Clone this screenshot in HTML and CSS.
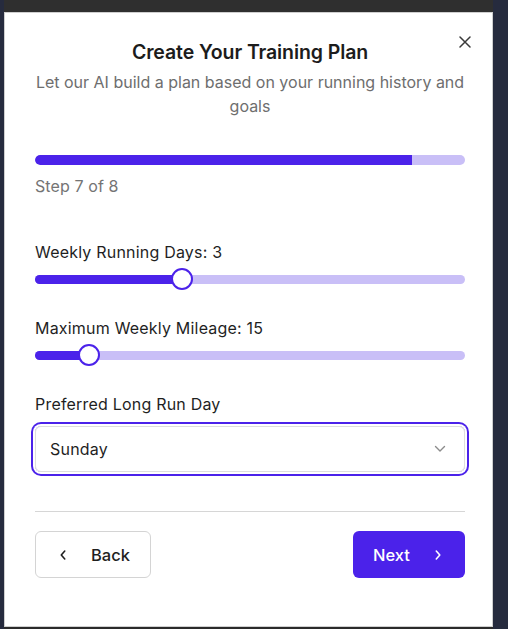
FILE: index.html
```html
<!DOCTYPE html>
<html lang="en">
<head>
<meta charset="utf-8">
<title>Create Your Training Plan</title>
<link rel="stylesheet" href="styles.css">
</head>
<body>
<div class="frame">
  <div class="topbar"></div>
  <div class="modal">
    <button class="close" aria-label="Close">
      <svg width="12" height="12" viewBox="0 0 12 12"><path d="M1 1L11 11M11 1L1 11" stroke="#3a3a3a" stroke-width="1.5" stroke-linecap="round"/></svg>
    </button>
    <h1 class="title">Create Your Training Plan</h1>
    <p class="subtitle">Let our AI build a plan based on your running history and goals</p>

    <div class="progress"><div class="progress-fill" style="width:87.6%"></div></div>
    <p class="step">Step 7 of 8</p>

    <div class="field">
      <label class="label">Weekly Running Days: 3</label>
      <div class="slider">
        <div class="track"><div class="fill" style="width:147px"></div></div>
        <div class="thumb" style="left:136px"></div>
      </div>
    </div>

    <div class="field">
      <label class="label">Maximum Weekly Mileage: 15</label>
      <div class="slider">
        <div class="track"><div class="fill" style="width:54px"></div></div>
        <div class="thumb" style="left:43px"></div>
      </div>
    </div>

    <div class="field field-select">
      <label class="label">Preferred Long Run Day</label>
      <div class="select">
        <span>Sunday</span>
        <svg width="12" height="8" viewBox="0 0 12 8"><path d="M1.5 1.5L6 6L10.5 1.5" fill="none" stroke="#8c8c8c" stroke-width="1.4" stroke-linecap="round" stroke-linejoin="round"/></svg>
      </div>
    </div>

    <hr class="divider">

    <div class="actions">
      <button class="btn btn-back">
        <svg width="16" height="16" viewBox="0 0 16 16"><path d="M10 3.5L6 8L10 12.5" fill="none" stroke="#1f1f1f" stroke-width="1.8" stroke-linecap="round" stroke-linejoin="round"/></svg>
        <span>Back</span>
      </button>
      <button class="btn btn-next">
        <span>Next</span>
        <svg width="16" height="16" viewBox="0 0 16 16"><path d="M6 3.5L10 8L6 12.5" fill="none" stroke="#ffffff" stroke-width="1.8" stroke-linecap="round" stroke-linejoin="round"/></svg>
      </button>
    </div>
  </div>
  <div class="bottombar"></div>
</div>
</body>
</html>
```
FILE: styles.css
```css
* { box-sizing: border-box; }

html, body {
  margin: 0;
  padding: 0;
  height: 629px;
  overflow: hidden;
}

body {
  background: #262b3e;
  font-family: Inter, "Noto Sans", "Liberation Sans", sans-serif;
  color: #1f1f1f;
}

.frame {
  margin-left: 4px;
  width: 489px;
  height: 629px;
  display: flex;
  flex-direction: column;
}

.topbar {
  height: 12px;
  background: #2f2f2f;
  flex: none;
}

.bottombar {
  flex: 1;
  background: #2b2b2b;
}

.modal {
  position: relative;
  height: 615px;
  flex: none;
  background: #ffffff;
  border: 1px solid #cfcfcf;
  padding: 25px 27px 0 30px;
  display: flex;
  flex-direction: column;
}

.close {
  position: absolute;
  top: 23px;
  right: 21px;
  width: 12px;
  height: 12px;
  padding: 0;
  border: 0;
  background: none;
  display: flex;
}

.title {
  margin: 0;
  font-size: 19.5px;
  line-height: 28px;
  font-weight: 600;
  text-align: center;
  color: #1c1c1c;
  letter-spacing: -0.1px;
}

.subtitle {
  margin: 4px 0 0;
  font-size: 16px;
  line-height: 24px;
  text-align: center;
  color: #6e6e6e;
}

.progress {
  margin-top: 37px;
  height: 10px;
  border-radius: 5px;
  background: #c9bff7;
  overflow: hidden;
}

.progress-fill {
  height: 100%;
  background: #4b22ea;
  border-radius: 5px 0 0 5px;
}

.step {
  margin: 9px 0 0;
  font-size: 16px;
  line-height: 24px;
  color: #747474;
  letter-spacing: 0.1px;
}

.field {
  display: flex;
  flex-direction: column;
}

.step + .field { margin-top: 42px; }
.field + .field { margin-top: 26px; }

.label {
  font-size: 16px;
  line-height: 24px;
  color: #1f1f1f;
  letter-spacing: 0.2px;
}

.slider {
  position: relative;
  margin-top: 4px;
  height: 22px;
  display: flex;
  align-items: center;
}

.track {
  width: 100%;
  height: 9px;
  border-radius: 5px;
  background: #c9bff7;
  overflow: hidden;
}

.fill {
  height: 100%;
  background: #4b22ea;
}

.thumb {
  position: absolute;
  top: 0;
  width: 22px;
  height: 22px;
  border-radius: 50%;
  background: #ffffff;
  border: 2px solid #4b22ea;
}

.field-select .label { margin-bottom: 10px; }

.select {
  height: 46px;
  border: 1.5px solid #dedede;
  border-radius: 6px;
  box-shadow: 0 0 0 2px #ffffff, 0 0 0 4px #4b22ea;
  display: flex;
  align-items: center;
  justify-content: space-between;
  padding: 0 18px 0 14px;
  font-size: 16px;
  color: #1f1f1f;
  letter-spacing: 0.2px;
}

.divider {
  margin: 39px 0 0;
  border: 0;
  border-top: 1px solid #d6d6d6;
  height: 0;
}

.actions {
  margin-top: 19px;
  display: flex;
  justify-content: space-between;
}

.btn {
  height: 47px;
  border-radius: 6px;
  display: flex;
  align-items: center;
  gap: 21px;
  padding: 0 20px;
  font-family: inherit;
  font-size: 16.5px;
  font-weight: 500;
}

.btn-back {
  width: 116px;
  background: #ffffff;
  border: 1px solid #d4d4d4;
  color: #1f1f1f;
}

.btn-next {
  width: 112px;
  background: #4b22ea;
  border: 0;
  color: #ffffff;
}
```
